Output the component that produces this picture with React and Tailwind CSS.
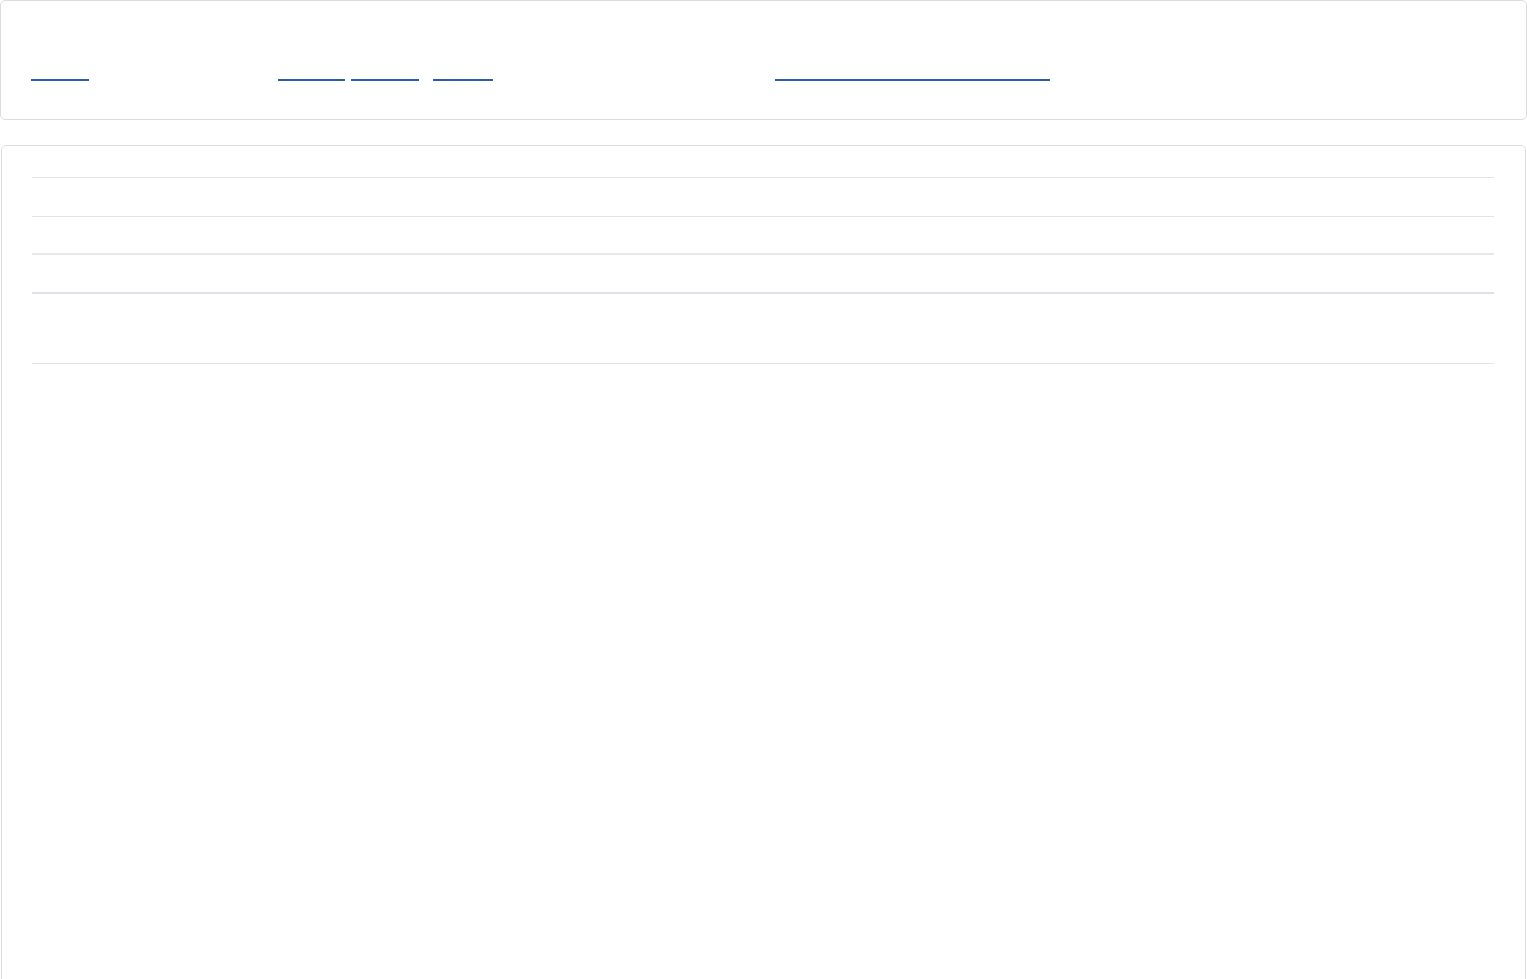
import React from "react";

const links = [
  { label: "Home", w: "w-[58px]", ml: "ml-0" },
  { label: "Orders", w: "w-[67px]", ml: "ml-[189px]" },
  { label: "Stocks", w: "w-[68px]", ml: "ml-[6px]" },
  { label: "Users", w: "w-[60px]", ml: "ml-[14px]" },
  { label: "Account settings and profile", w: "w-[275px]", ml: "ml-[282px]" },
];

const rows = [
  { h: "h-[39px]", border: "border-b border-[#e4e4e7]" },
  { h: "h-[38px]", border: "border-b-2 border-[#e6e8eb]" },
  { h: "h-[39px]", border: "border-b-2 border-[#dee2e6]" },
  { h: "h-[70px]", border: "border-b border-[#e4e4e7]" },
];

export default function App() {
  return (
    <div className="h-screen bg-white font-['Liberation_Sans',sans-serif] text-white overflow-hidden">
      {/* Nav box */}
      <div className="h-[120px] w-[1527px] border border-[#dddddd] rounded-[5px] flex items-start pl-[30px] pt-[58px]">
        {links.map((l) => (
          <a
            key={l.label}
            href="#"
            className={`${l.w} ${l.ml} h-[22px] block border-b-2 border-[#2a5ea8] text-white text-[15px] overflow-hidden whitespace-nowrap`}
          >
            {l.label}
          </a>
        ))}
      </div>

      {/* Table panel */}
      <div className="mt-[25px] ml-[1px] w-[1525px] h-[840px] border border-[#dddddd] rounded-[5px] pl-[30px] pr-[31px] pt-[31px]">
        <div className="border-t border-[#e4e4e7]">
          {rows.map((r, i) => (
            <div key={i} className={`${r.h} ${r.border}`} />
          ))}
        </div>
      </div>
    </div>
  );
}
